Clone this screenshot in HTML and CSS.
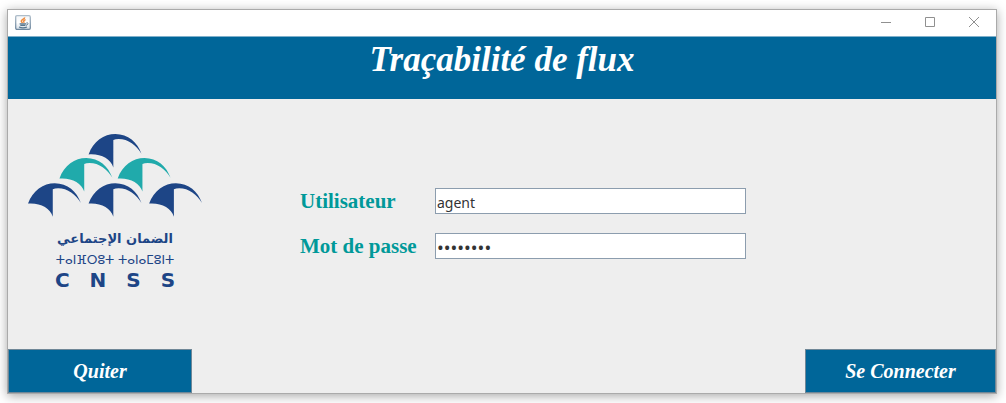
FILE: index.html
```html
<!DOCTYPE html>
<html lang="fr">
<head>
<meta charset="utf-8">
<title>Traçabilité de flux</title>
<link rel="stylesheet" href="styles.css">
</head>
<body>
<main class="window">
  <div class="titlebar">
    <svg class="app-icon" width="16" height="15" viewBox="0 0 16 15" aria-hidden="true">
      <defs>
        <linearGradient id="tile" x1="0" y1="0" x2="0" y2="1">
          <stop offset="0" stop-color="#f4f6f8"/><stop offset="0.5" stop-color="#fff"/><stop offset="1" stop-color="#d5dee6"/>
        </linearGradient>
        <linearGradient id="rim" x1="0" y1="0" x2="0" y2="1">
          <stop offset="0" stop-color="#aebdca"/><stop offset="1" stop-color="#6f889f"/>
        </linearGradient>
      </defs>
      <rect x="0.7" y="0.7" width="14.6" height="13.6" rx="1.2" fill="url(#tile)" stroke="url(#rim)" stroke-width="1.3"/>
      <path d="M9.6 2.3C10 4 6 4.8 6.3 6.2C6.4 7 7.2 7.4 7.4 8M10.6 4.6C9 5.2 8 6 9.2 7.8" fill="none" stroke="#ee8b3e" stroke-width="1.5"/>
      <path d="M4.6 8.8H11M5.3 10.3H10.4M4 12C6 12.8 10 12.8 12 12" fill="none" stroke="#58778f" stroke-width="1.3"/>
      <path d="M11.3 8C13.6 7.2 13.8 9.6 11 10.3" fill="none" stroke="#58778f"/>
    </svg>
    <div class="controls">
      <button class="control" type="button" aria-label="Réduire"><svg width="10" height="10" viewBox="0 0 10 10"><path d="M0 5.5H10"/></svg></button>
      <button class="control" type="button" aria-label="Agrandir"><svg width="10" height="10" viewBox="0 0 10 10"><path d="M.5 .5H9.5V9.5H.5Z"/></svg></button>
      <button class="control" type="button" aria-label="Fermer"><svg width="10" height="10" viewBox="0 0 10 10"><path d="M0 0L10 10M10 0L0 10"/></svg></button>
    </div>
  </div>
  <header class="banner"><h1 class="title">Traçabilité de flux</h1></header>
  <form class="login">
    <div class="content">
      <div class="logo">
        <svg class="umbrellas" viewBox="0 0 520 247" aria-hidden="true">
          <defs>
            <path id="umbrella" d="M0 61C14 22 46 0 80 0C118 0 146 25 158 59C144 34 118 15 90 15Q80 15 74 18V100C66 74 36 58 0 61Z"/>
          </defs>
          <g class="navy">
            <use href="#umbrella" x="181" y="0"/>
            <use href="#umbrella" x="0" y="147"/>
            <use href="#umbrella" x="181" y="147"/>
            <use href="#umbrella" x="362" y="147"/>
          </g>
          <g class="teal">
            <use href="#umbrella" x="94" y="72"/>
            <use href="#umbrella" x="268" y="72"/>
          </g>
        </svg>
        <div class="arabic" lang="ar" dir="rtl">الضمان الإجتماعي</div>
        <div class="tifinagh" lang="zgh">ⵜⴰⵏⴼⵔⵓⵜ ⵜⴰⵏⴰⵎⵓⵏⵜ</div>
        <div class="acronym">C&emsp;N&emsp;S&emsp;S</div>
      </div>
      <div class="fields">
        <label class="label" for="user">Utilisateur</label>
        <input class="input" id="user" type="text" value="agent">
        <label class="label" for="password">Mot de passe</label>
        <input class="input password" id="password" type="password" value="password">
      </div>
    </div>
    <div class="actions">
      <button class="action quit" type="button">Quiter</button>
      <button class="action connect" type="submit">Se Connecter</button>
    </div>
  </form>
</main>
</body>
</html>
```
FILE: styles.css
```css
* { box-sizing: border-box; }

body {
  margin: 0;
  min-height: 100vh;
  padding: 9px 9px 9px 7px;
  display: flex;
  background: #fff;
  font-family: "Liberation Serif", "Times New Roman", serif;
}

.window {
  flex: 1;
  display: flex;
  flex-direction: column;
  border: 1px solid #aaa;
  background: #eee;
  box-shadow: 0 2px 10px rgba(0, 0, 0, 0.35);
}

.titlebar {
  height: 26px;
  display: flex;
  justify-content: space-between;
  background: #fff;
}

.app-icon { margin: 5px 0 0 7px; }
.controls { display: flex; }

.control {
  width: 44px;
  padding: 0 0 2px;
  border: 0;
  display: flex;
  align-items: center;
  justify-content: center;
  background: none;
}

.control path { fill: none; stroke: #909090; stroke-width: 1; }

.banner {
  height: 63px;
  background: #006699;
  border-top: 1px solid #7fb0cb;
  text-align: center;
}

.title {
  margin: 3px 0 0;
  color: #fff;
  font-size: 35px;
  line-height: 40px;
  font-style: italic;
}

.login { flex: 1; display: flex; flex-direction: column; }

.content {
  flex: 1;
  display: flex;
  align-items: flex-start;
}

.logo {
  width: 174px;
  margin: 35px 0 0 20px;
  display: flex;
  flex-direction: column;
  align-items: center;
  color: #1d4586;
  font-family: "DejaVu Sans", sans-serif;
  white-space: nowrap;
}

.umbrellas { display: block; width: 100%; }
.navy { fill: #1d4586; }
.teal { fill: #20aaab; }

.arabic { margin-top: 10px; font-size: 13px; line-height: 24px; font-weight: bold; }
.tifinagh { font-size: 12px; line-height: 18px; }
.acronym { font-size: 20px; line-height: 22px; font-weight: bold; }

.fields {
  margin: 89px 0 0 98px;
  display: grid;
  grid-template-columns: 120px 311px;
  gap: 19px 15px;
  align-items: center;
}

.label { color: #009999; font-size: 21px; line-height: 26px; font-weight: bold; white-space: nowrap; }

.input {
  width: 100%;
  height: 26px;
  padding: 2px 1px 0;
  border: 1px solid #8c9dae;
  border-radius: 0;
  background: #fff;
  color: #333;
  font: 14px "Noto Sans", sans-serif;
  outline: 0;
}

.password { font-size: 18px; }

.actions { display: flex; justify-content: space-between; }

.action {
  height: 44px;
  padding: 0;
  border: 1px solid #6f8797;
  background: #006699;
  color: #fff;
  font: italic bold 20px "Liberation Serif", "Times New Roman", serif;
}

.quit { width: 184px; }
.connect { width: 191px; }
```
